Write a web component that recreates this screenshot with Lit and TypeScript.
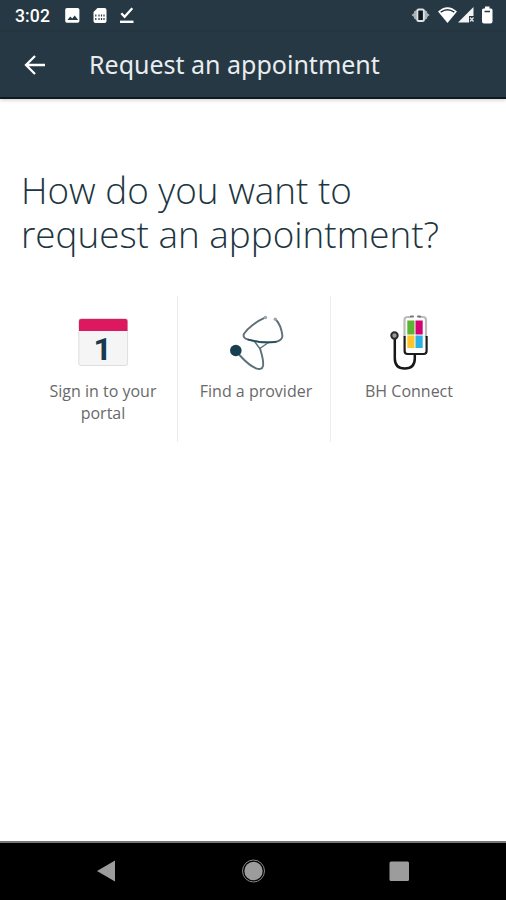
import { LitElement, html, css } from "lit";
import { customElement } from "lit/decorators.js";

const calendar = html`<svg width="52" height="54" viewBox="77 314 52 54">
  <rect x="78.800" y="318.500" width="48.800" height="47" rx="2" fill="#f5f5f5" stroke="#dedede" />
  <path d="M79 331v-10q0-2 2-2h44.500q2 0 2 2v10z" fill="#dc1860" />
  <text x="102.700" y="359.500" text-anchor="middle" class="day">1</text>
</svg>`;

const stethoscope = html`<svg width="58" height="58" viewBox="227 314 58 58" fill="none" stroke-linecap="round" stroke-linejoin="round">
  <g stroke="#5d707a" stroke-width="1.900">
    <path d="M264.500 317.800C257 321 248 328 244.200 333.500C242.500 336.500 244.500 338.500 247.500 339.300C255 341.500 266 343.200 275 342C280 341.300 283 338.500 282.300 335C281.500 329 279.500 323.500 275.800 319.500" />
    <path d="M254.500 341.500L259.800 348.500L268.500 342.500" stroke-width="1.500" />
    <path d="M260 348.500C261.500 354 264 360 263 366C262.300 369.500 259 369.500 256 368.300C250 366 244 360 239.500 355" />
  </g>
  <path d="M248 339.500Q262 343.500 276 341.800" stroke="#234a58" stroke-width="1.500" />
  <circle cx="265.500" cy="317.500" r="1.700" fill="#a0a5a8" /><circle cx="275.300" cy="319.300" r="1.700" fill="#a0a5a8" />
  <circle cx="235.800" cy="350.500" r="5.800" fill="#173e51" />
</svg>`;

const connect = html`<svg width="42" height="58" viewBox="388 314 42 58" fill="none">
  <path d="M404.500 337v-17q0-3 3-3h3.500M419 317h4q3 0 3 3v17" stroke="#bcbcbc" stroke-width="2.200" />
  <path d="M411 316.500h2M418 316.500h2" stroke="#777" stroke-width="2.200" stroke-linecap="round" />
  <path d="M404.600 336v15q0 3 3 3h16q3 0 3-3v-15" stroke="#1c1c1c" stroke-width="2.200" />
  <path d="M394.800 339v19.500q0 10 10 10t10-10v-4" stroke="#171717" stroke-width="2.500" />
  <circle cx="394.500" cy="335.500" r="3.200" fill="#999" stroke="#292929" stroke-width="2" />
  <path d="M407.300 320.500h7.200v14h-7.200z" fill="#5bb530" /><path d="M415.500 320.500h7.200v14h-7.200z" fill="#d50075" />
  <path d="M407.300 335.500h7.200v12.500h-7.200z" fill="#ffc52b" /><path d="M415.500 335.500h7.200v12.500h-7.200z" fill="#2bb1e6" />
</svg>`;

const notifications = html`<svg width="72" height="20" viewBox="64 6 72 20">
  <rect x="65.200" y="8" width="14.200" height="14.800" rx="1.800" fill="#fff" />
  <path d="M67.500 20l2.700-3.500 2 2 2.500-3 3.500 4.500z" fill="#263843" />
  <path d="M97.500 8h7q2 0 2 2v11q0 2-2 2h-9q-2 0-2-2v-9z" fill="#fff" />
  <path d="M95.800 14.500v2M95.800 18v2M99 14.500v2M99 18v2M101.500 14.500v2M101.500 18v2M104 14.500v2M104 18v2" stroke="#263843" stroke-width="1.200" />
  <path d="M121.300 13.200l3.300 3.500 7.700-8.500" fill="none" stroke="#fff" stroke-width="2.300" />
  <path d="M120 21.800h13.500" stroke="#fff" stroke-width="2.400" />
</svg>`;

const system = html`<svg width="84" height="20" viewBox="411 6 84 20">
  <path d="M416.500 10v10l-2.500-1.500v-1.500l-2.500-2 2.500-2v-1.500zM424.700 10v10l2.500-1.500v-1.500l2.500-2-2.500-2v-1.500z" fill="#aab2b6" />
  <rect x="417.300" y="9.500" width="6.600" height="11.500" rx="1.500" fill="#0c1a22" stroke="#dfe2e4" stroke-width="2" />
  <path d="M438 11.500Q447.500 3 457 11.500L447.500 23z" fill="#fff" />
  <path d="M440.700 12.200Q447.500 7.500 454.300 12.200" fill="none" stroke="#263843" stroke-width="1.500" />
  <path d="M473.500 7v15.500H458z" fill="#f2f3f4" /><path d="M469 16h5v7h-5z" fill="#263843" />
  <path d="M470 17.500l3.500 4M473.500 17.500l-3.500 4" stroke="#dfe2e4" stroke-width="1.300" />
  <path d="M485 6.500h4.500v2h1.500q1.500 0 1.500 1.500V21.500q0 2-2 2H484q-2 0-2-2V10q0-1.500 1.500-1.500H485z" fill="#fff" />
  <path d="M484.500 11.500h5.500" stroke="#263843" stroke-width="1.500" />
</svg>`;

@customElement("app-root")
export class AppRoot extends LitElement {
  static styles = css`
    :host { display: flex; flex-direction: column; height: 900px; background: #fff; font-family: "Open Sans", sans-serif; }
    svg { display: block; flex: none; }
    .status { height: 32px; display: flex; align-items: center; justify-content: space-between; background: #263843; padding: 0 11px 0 15px; box-sizing: border-box; color: #fff; }
    .left { display: flex; align-items: center; }
    .clock { width: 49px; font: 500 17.6px/20px Roboto, sans-serif; letter-spacing: .1px; }
    .bar { height: 67px; box-sizing: border-box; flex: none; display: flex; align-items: center; background: #263843; border-bottom: 2px solid #0e1920; padding-left: 23px; box-shadow: 0 1px 4px #0003; }
    .title { margin: -2px 0 0 42px; color: #e9edef; font: 400 25px/34px "Noto Sans", sans-serif; white-space: nowrap; }
    main { flex: 1; padding-top: 69px; }
    h2 { margin: 0; padding-left: 21px; font-size: 36.85px; line-height: 44px; font-weight: 300; color: #203540; white-space: nowrap; }
    .tiles { display: grid; grid-template-columns: 149px 153px 156px; margin: 40px 0 0 29px; height: 146px; }
    .tile { display: flex; flex-direction: column; align-items: center; padding-top: 18px; border-right: 1px solid #ececec; color: #696969; font-size: 16px; line-height: 21.500px; text-align: center; }
    .tile:nth-child(2) { padding-left: 4px; }
    .tile:last-child { border: 0; }
    .icon { height: 67px; display: flex; align-items: flex-start; }
    .day { font: 700 32px Roboto, sans-serif; fill: #18394e; }
    nav { height: 59px; box-sizing: border-box; background: #000; border-top: 2px solid #777; }
  `;

  render() {
    return html`
      <div class="status">
        <div class="left"><span class="clock">3:02</span>${notifications}</div>
        ${system}
      </div>
      <header class="bar">
        <svg width="24" height="24" viewBox="0 0 24 24" fill="none" stroke="#fff" stroke-width="2.300"><path d="M12 3l-9 9 9 9M3 12h19" /></svg>
        <h1 class="title">Request an appointment</h1>
      </header>
      <main>
        <h2>How do you want to<br />request an appointment?</h2>
        <div class="tiles">
          <div class="tile"><div class="icon">${calendar}</div><span>Sign in to your<br />portal</span></div>
          <div class="tile"><div class="icon">${stethoscope}</div><span>Find a provider</span></div>
          <div class="tile"><div class="icon">${connect}</div><span>BH Connect</span></div>
        </div>
      </main>
      <nav>
        <svg width="506" height="57" viewBox="0 843 506 57" fill="#9c9c9c">
          <path d="M97 871l18-10.500v21z" />
          <circle cx="253.500" cy="871" r="9.200" /><circle cx="253.500" cy="871" r="11" fill="none" stroke="#888" />
          <rect x="389.500" y="861.500" width="19.500" height="19.500" rx="1.500" />
        </svg>
      </nav>`;
  }
}
